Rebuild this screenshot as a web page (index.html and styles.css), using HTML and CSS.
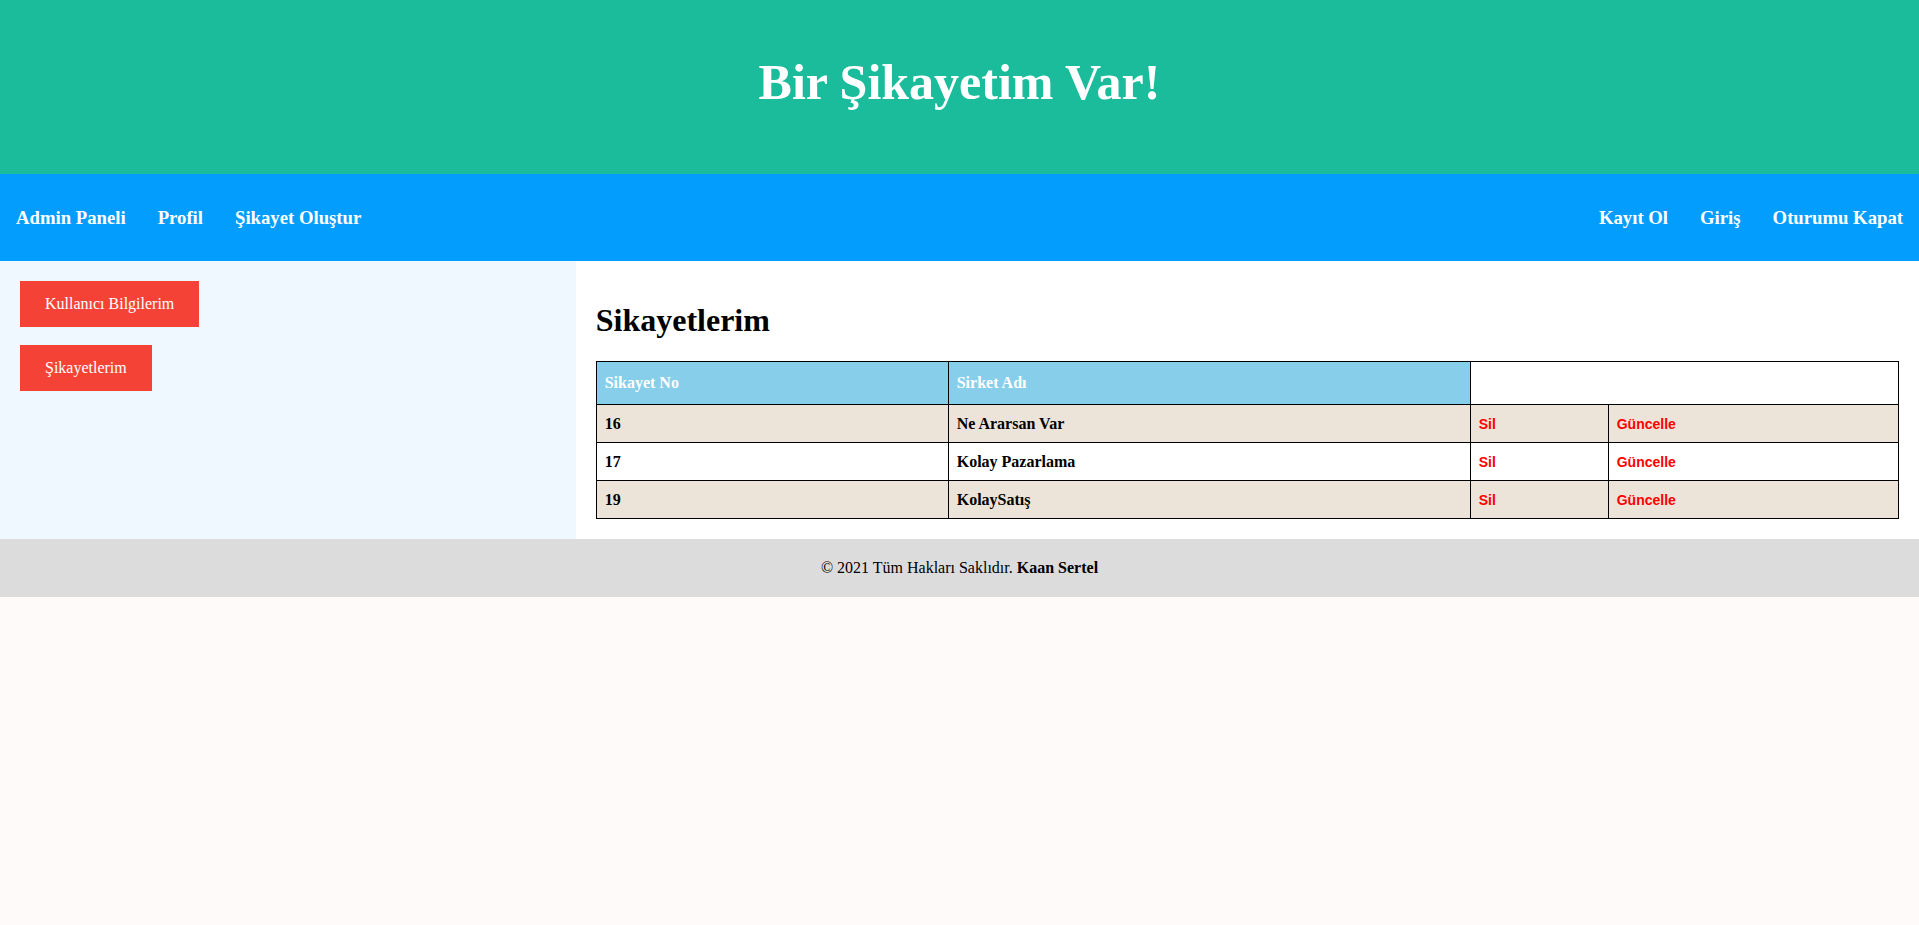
FILE: index.html
```html
<!DOCTYPE html>
<html lang="tr">
<head>
<meta charset="utf-8">
<title>Bir Şikayetim Var!</title>
<link rel="stylesheet" href="styles.css">
</head>
<body>
<header class="site-header">
  <h1 class="site-title">Bir Şikayetim Var!</h1>
</header>
<nav class="topnav">
  <div class="nav-group">
    <a class="nav-link" href="#">Admin Paneli</a>
    <a class="nav-link" href="#">Profil</a>
    <a class="nav-link" href="#">Şikayet Oluştur</a>
  </div>
  <div class="nav-group">
    <a class="nav-link" href="#">Kayıt Ol</a>
    <a class="nav-link" href="#">Giriş</a>
    <a class="nav-link" href="#">Oturumu Kapat</a>
  </div>
</nav>
<div class="page">
  <aside class="sidebar">
    <a class="side-btn" href="#">Kullanıcı Bilgilerim</a>
    <a class="side-btn" href="#">Şikayetlerim</a>
  </aside>
  <main class="content">
    <h2 class="section-title">Sikayetlerim</h2>
    <table class="complaints">
      <colgroup>
        <col class="c-no">
        <col class="c-name">
        <col class="c-del">
        <col class="c-upd">
      </colgroup>
      <thead>
        <tr>
          <th class="th-blue">Sikayet No</th>
          <th class="th-blue">Sirket Adı</th>
          <th class="th-empty" colspan="2"></th>
        </tr>
      </thead>
      <tbody>
        <tr class="row-alt">
          <td>16</td>
          <td>Ne Ararsan Var</td>
          <td class="action"><a href="#">Sil</a></td>
          <td class="action"><a href="#">Güncelle</a></td>
        </tr>
        <tr>
          <td>17</td>
          <td>Kolay Pazarlama</td>
          <td class="action"><a href="#">Sil</a></td>
          <td class="action"><a href="#">Güncelle</a></td>
        </tr>
        <tr class="row-alt">
          <td>19</td>
          <td>KolaySatış</td>
          <td class="action"><a href="#">Sil</a></td>
          <td class="action"><a href="#">Güncelle</a></td>
        </tr>
      </tbody>
    </table>
  </main>
</div>
<footer class="site-footer">
  © 2021 Tüm Hakları Saklıdır. <b>Kaan Sertel</b>
</footer>
</body>
</html>
```
FILE: styles.css
```css
* {
  box-sizing: border-box;
}

body {
  margin: 0;
  background: #fffafa;
  font-family: "Liberation Serif", "Times New Roman", serif;
  font-size: 16px;
  color: #000;
}

.site-header {
  background: #1abc9c;
  height: 174px;
  padding-top: 56px;
  text-align: center;
}

.site-title {
  margin: 0;
  font-size: 50px;
  line-height: 53px;
  font-weight: bold;
  color: #fff;
}

.topnav {
  background: #039dfe;
  height: 87px;
  display: flex;
  justify-content: space-between;
  align-items: center;
}

.nav-group {
  display: flex;
}

.nav-link {
  padding: 0 16px;
  color: #fff;
  text-decoration: none;
  font-weight: bold;
  font-size: 18.72px;
}

.page {
  display: flex;
  align-items: stretch;
}

.sidebar {
  width: 30%;
  flex: 0 0 30%;
  background: #f0f8ff;
  padding: 20px;
  display: flex;
  flex-direction: column;
  align-items: flex-start;
  gap: 18px;
}

.side-btn {
  display: block;
  background: #f44336;
  color: #fff;
  text-decoration: none;
  padding: 14px 25px;
  font-size: 16px;
  line-height: 18px;
  height: 46px;
}

.content {
  flex: 1 1 auto;
  background: #fff;
  padding: 20px;
}

.section-title {
  font-size: 32px;
  font-weight: bold;
  margin: 21.44px 0;
}

.complaints {
  width: 100%;
  border-collapse: collapse;
  table-layout: fixed;
}

.c-no { width: 352px; }
.c-name { width: 522px; }
.c-del { width: 138px; }

.complaints th,
.complaints td {
  border: 1px solid #000;
  text-align: left;
  font-weight: bold;
  font-size: 16px;
}

.complaints th {
  padding: 12px 8px;
  line-height: 18px;
  color: #fff;
}

.th-blue {
  background: #87ceeb;
}

.th-empty {
  background: #fff;
}

.complaints td {
  padding: 9px 8px;
  line-height: 19px;
}

.row-alt {
  background: #ece3d9;
}

.action a {
  color: #ff0000;
  text-decoration: none;
  font-family: "Comic Sans MS", "Liberation Sans", sans-serif;
  font-size: 14px;
  line-height: 14px;
  font-weight: bold;
}

.site-footer {
  background: #dcdcdc;
  text-align: center;
  padding: 20px;
  font-size: 16px;
  line-height: 18.4px;
}
```
